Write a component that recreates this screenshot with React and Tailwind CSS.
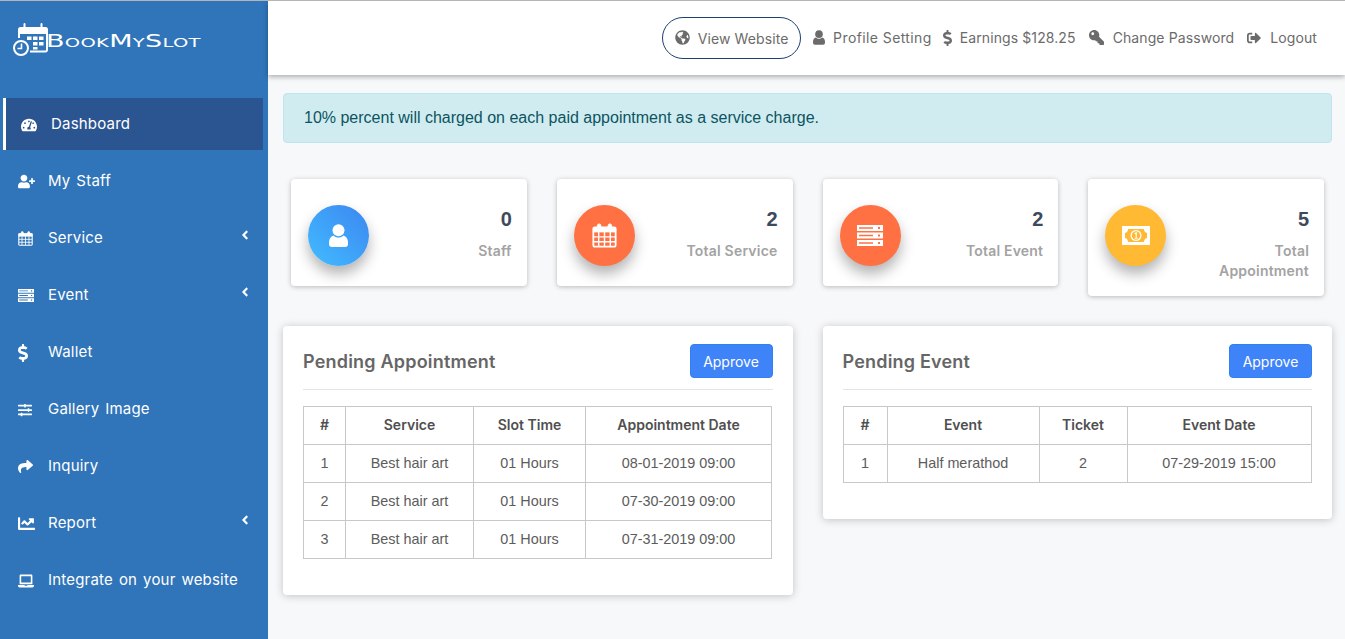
import React from 'react';
import {
  FaTachometerAlt, FaUserPlus, FaDollarSign, FaSlidersH, FaShare, FaChartLine, FaLaptop,
  FaAngleLeft, FaGlobeAmericas, FaKey, FaSignOutAlt,
} from 'react-icons/fa';

const work = "font-['Inter',sans-serif]";
const arial = "font-['Liberation_Sans',Arial,sans-serif]";

function CalendarIcon({ size = 14 }) {
  return (
    <svg width={size} height={size} viewBox="0 0 28 28" fill="none" stroke="currentColor">
      <path d="M3 5h22a1.500 1.500 0 0 1 1.500 1.500V25a1.500 1.500 0 0 1-1.500 1.500H3A1.500 1.500 0 0 1 1.500 25V6.500A1.500 1.500 0 0 1 3 5z" strokeWidth="2" />
      <rect x="1" y="4.500" width="26" height="6" fill="currentColor" stroke="none" />
      <rect x="6" y="1" width="4" height="7" rx="2" fill="currentColor" strokeWidth="1" />
      <rect x="18" y="1" width="4" height="7" rx="2" fill="currentColor" strokeWidth="1" />
      <path d="M1.500 15.500h25M1.500 21h25M7.500 10v16M14 10v16M20.500 10v16" strokeWidth="1.600" />
    </svg>
  );
}

function UserIcon({ width = 12, height = 15 }) {
  return (
    <svg width={width} height={height} viewBox="0 0 19 23" fill="currentColor">
      <circle cx="9.500" cy="6.200" r="6" />
      <path d="M4.500 11.500C6 13 7.500 13.600 9.500 13.600S13 13 14.500 11.500C17.300 12.300 19 15 19 18.500V20a3 3 0 0 1-3 3H3a3 3 0 0 1-3-3v-1.500C0 15 1.700 12.300 4.500 11.500z" />
    </svg>
  );
}

function ServerIcon({ width = 16, height = 13 }) {
  const bar = y => `M0 ${y}h26v6H0zM2 ${y + 2.2}v1.500h14v-1.500zM21 ${y + 2}v2h2v-2z`;
  return (
    <svg width={width} height={height} viewBox="0 0 26 21" fill="currentColor">
      <path fillRule="evenodd" d={`${bar(0)}${bar(7.5)}${bar(15)}`} />
    </svg>
  );
}

function MoneyIcon({ bg }) {
  return (
    <svg width="28" height="19" viewBox="0 0 28 19">
      <rect width="28" height="19" fill="white" />
      <path d="M6 3h16c0 2 1 3.500 3 4v5c-2 .5-3 2-3 4H6c0-2-1-3.500-3-4V7c2-.5 3-2 3-4z" fill={bg} />
      <circle cx="14" cy="9.500" r="5.500" fill="white" />
      <circle cx="14" cy="9.500" r="4.200" fill={bg} />
      <path d="M12.600 7.800L14.200 6.800V12.200M12.800 12.200h2.800" fill="none" stroke="white" strokeWidth="1.100" />
    </svg>
  );
}

function LogoMark() {
  return (
    <svg width="38" height="36" viewBox="0 0 38 36" fill="none" stroke="white" className="shrink-0">
      <path d="M7 16V7.500a1.500 1.500 0 0 1 1.500-1.500h25a1.500 1.500 0 0 1 1.500 1.500V28a1.500 1.500 0 0 1-1.500 1.500H18" strokeWidth="2" />
      <rect x="7" y="6" width="28" height="6" fill="white" stroke="none" />
      <path d="M12.500 2v6M29.500 2v6" strokeWidth="2" strokeLinecap="round" />
      <g fill="white" stroke="none">
        <rect x="15" y="14.500" width="4.500" height="3.500" />
        <rect x="21" y="14.500" width="4.500" height="3.500" />
        <rect x="27" y="14.500" width="4.500" height="3.500" />
        <rect x="21" y="20" width="4.500" height="3.500" />
        <rect x="27" y="20" width="4.500" height="3.500" />
        <rect x="21" y="25" width="4.500" height="2.500" />
      </g>
      <circle cx="9" cy="26" r="7" strokeWidth="2" />
      <path d="M9.500 21.500V26.500H5.500" strokeWidth="1.600" />
    </svg>
  );
}

const menu = [
  { label: 'My Staff', icon: <FaUserPlus size={17} /> },
  { label: 'Service', icon: <CalendarIcon size={15} />, sub: true },
  { label: 'Event', icon: <ServerIcon width={16} height={13} />, sub: true },
  { label: 'Wallet', icon: <FaDollarSign size={18} className="w-[10px]" /> },
  { label: 'Gallery Image', icon: <FaSlidersH size={14} /> },
  { label: 'Inquiry', icon: <FaShare size={15} /> },
  { label: 'Report', icon: <FaChartLine size={17} />, sub: true },
  { label: 'Integrate on your website', icon: <FaLaptop size={16} /> },
];

function Sidebar() {
  return (
    <aside className={`w-[268px] shrink-0 bg-[#3074b9] text-white text-[15px] tracking-[0.2px] [word-spacing:1.5px] ${work}`}>
      <div className="h-[94px] pl-[12px] pt-[21px] flex items-start">
        <LogoMark />
        <span className="mt-[7px] -ml-[4px] origin-left scale-x-[1.5] font-['DejaVu_Sans',sans-serif] text-[18px] leading-[24px] [font-variant:small-caps] whitespace-nowrap">
          BookMySlot
        </span>
      </div>
      <div className="h-[57px] flex items-center">
        <div className="ml-[3px] w-[260px] h-[52px] pt-[2px] bg-[#2b5591] border-l-[3px] border-white flex items-center pl-[15px]">
          <FaTachometerAlt size={16} className="w-[16px]" />
          <span className="ml-[14px]">Dashboard</span>
        </div>
      </div>
      {menu.map(m => (
        <div key={m.label} className="h-[57px] pt-[2px] flex items-center pl-[18px] pr-[16px]">
          <span className="w-[30px] flex items-center">{m.icon}</span>
          <span className="flex-1 whitespace-nowrap">{m.label}</span>
          {m.sub && <FaAngleLeft size={14} className="-mt-[7px]" />}
        </div>
      ))}
    </aside>
  );
}

function TopBar() {
  return (
    <header className={`relative h-[74px] pb-[1px] bg-white shadow-[0_2px_5px_rgba(0,0,0,0.3)] flex items-center justify-end pr-[28px] text-[14px] tracking-[0.1px] text-[#6b6b6b] ${work}`}>
      <a className="h-[42px] w-[139px] mt-[1px] rounded-full border border-[#1d3f72] flex items-center justify-center gap-[8px]">
        <FaGlobeAmericas size={15} className="-mt-[2px]" /> View Website
      </a>
      <a className="ml-[12px] flex items-center gap-[8px] tracking-[0.4px]"><UserIcon /> Profile Setting</a>
      <a className="ml-[11px] flex items-center gap-[8px]"><FaDollarSign size={16} className="w-[9px]" /> Earnings $128.25</a>
      <a className="ml-[13px] flex items-center gap-[9px]"><FaKey size={15} className="-scale-x-100" /> Change Password</a>
      <a className="ml-[13px] flex items-center gap-[9px]"><FaSignOutAlt size={14} /> Logout</a>
    </header>
  );
}

function StatCard({ value, label, icon, circle }) {
  return (
    <div className="bg-white rounded-[4px] shadow-[0_1px_5px_rgba(0,0,0,0.25)] pl-[17px] pr-[15px] pt-[26px] pb-[15px] flex justify-between">
      <div className={`w-[61px] h-[61px] mb-[5px] rounded-full shrink-0 flex items-center justify-center text-white shadow-[0_8px_14px_rgba(0,0,0,0.3)] ${circle}`}>
        {icon}
      </div>
      <div className="text-right">
        <div className={`mt-[2px] text-[20px] leading-[24px] font-bold text-[#3d4a5c] ${arial}`}>{value}</div>
        <div className={`mt-[10px] w-[115px] ml-auto text-[14px] leading-[20px] tracking-[0.2px] font-semibold text-[#a3a3a3] ${work}`}>{label}</div>
      </div>
    </div>
  );
}

function Panel({ title, cols, head, rows }) {
  return (
    <div className="bg-white rounded-[4px] shadow-[0_1px_8px_rgba(0,0,0,0.22)] px-[20px] pt-[18px] pb-[36px]">
      <div className="flex items-center justify-between pb-[11px] border-b border-[#e4e4e4]">
        <h2 className={`text-[18px] tracking-[0.2px] font-semibold text-[#666666] ${work}`}>{title}</h2>
        <button className={`w-[83px] h-[34px] rounded-[4px] bg-[#3f83f8] border border-[#2f80f5] text-white text-[14px] ${work}`}>Approve</button>
      </div>
      <table className={`mt-[16px] table-fixed border-collapse text-[14.400px] text-center text-[#5c5c5c] ${arial}`} style={{ width: cols.reduce((a, b) => a + b, 0) + 1 }}>
        <colgroup>
          {cols.map((c, i) => <col key={i} style={{ width: c }} />)}
        </colgroup>
        <thead>
          <tr className="h-[38px]">
            {head.map(h => <th key={h} className={`border border-[#c8c8c8] pb-[2px] text-[14px] font-semibold text-[#4f4f4f] ${work}`}>{h}</th>)}
          </tr>
        </thead>
        <tbody>
          {rows.map((r, i) => (
            <tr key={i} className="h-[38px]">
              {r.map((c, j) => <td key={j} className="border border-[#c8c8c8]">{c}</td>)}
            </tr>
          ))}
        </tbody>
      </table>
    </div>
  );
}

export default function App() {
  return (
    <div className="h-[639px] overflow-hidden flex border-t border-[#b5b5b5] bg-[#f6f8fa]">
      <Sidebar />
      <div className="flex-1 min-w-0">
        <TopBar />
        <main className="pl-[15px] pr-[13px] pt-[18px]">
          <div className={`h-[50px] rounded-[4px] border border-[#bee5eb] bg-[#d1ecf1] text-[#0c5460] text-[16px] flex items-center pl-[20px] ${arial}`}>
            10% percent will charged on each paid appointment as a service charge.
          </div>
          <div className="mt-[36px] ml-[8px] w-[1033px] grid grid-cols-4 gap-[30px] items-start">
            <StatCard value="0" label="Staff" circle="bg-gradient-to-tr from-[#42bcff] to-[#3d86f0]" icon={<UserIcon width={19} height={23} />} />
            <StatCard value="2" label="Total Service" circle="bg-[#ff7143]" icon={<CalendarIcon size={25} />} />
            <StatCard value="2" label="Total Event" circle="bg-[#ff7143]" icon={<ServerIcon width={26} height={21} />} />
            <StatCard value="5" label="Total Appointment" circle="bg-[#ffb933]" icon={<MoneyIcon bg="#ffb933" />} />
          </div>
          <div className="mt-[30px] grid grid-cols-2 gap-[30px] items-start">
            <Panel
              title="Pending Appointment"
              cols={[42, 128, 112, 186]}
              head={['#', 'Service', 'Slot Time', 'Appointment Date']}
              rows={[
                ['1', 'Best hair art', '01 Hours', '08-01-2019 09:00'],
                ['2', 'Best hair art', '01 Hours', '07-30-2019 09:00'],
                ['3', 'Best hair art', '01 Hours', '07-31-2019 09:00'],
              ]}
            />
            <Panel
              title="Pending Event"
              cols={[44, 152, 88, 184]}
              head={['#', 'Event', 'Ticket', 'Event Date']}
              rows={[['1', 'Half merathod', '2', '07-29-2019 15:00']]}
            />
          </div>
        </main>
      </div>
    </div>
  );
}
